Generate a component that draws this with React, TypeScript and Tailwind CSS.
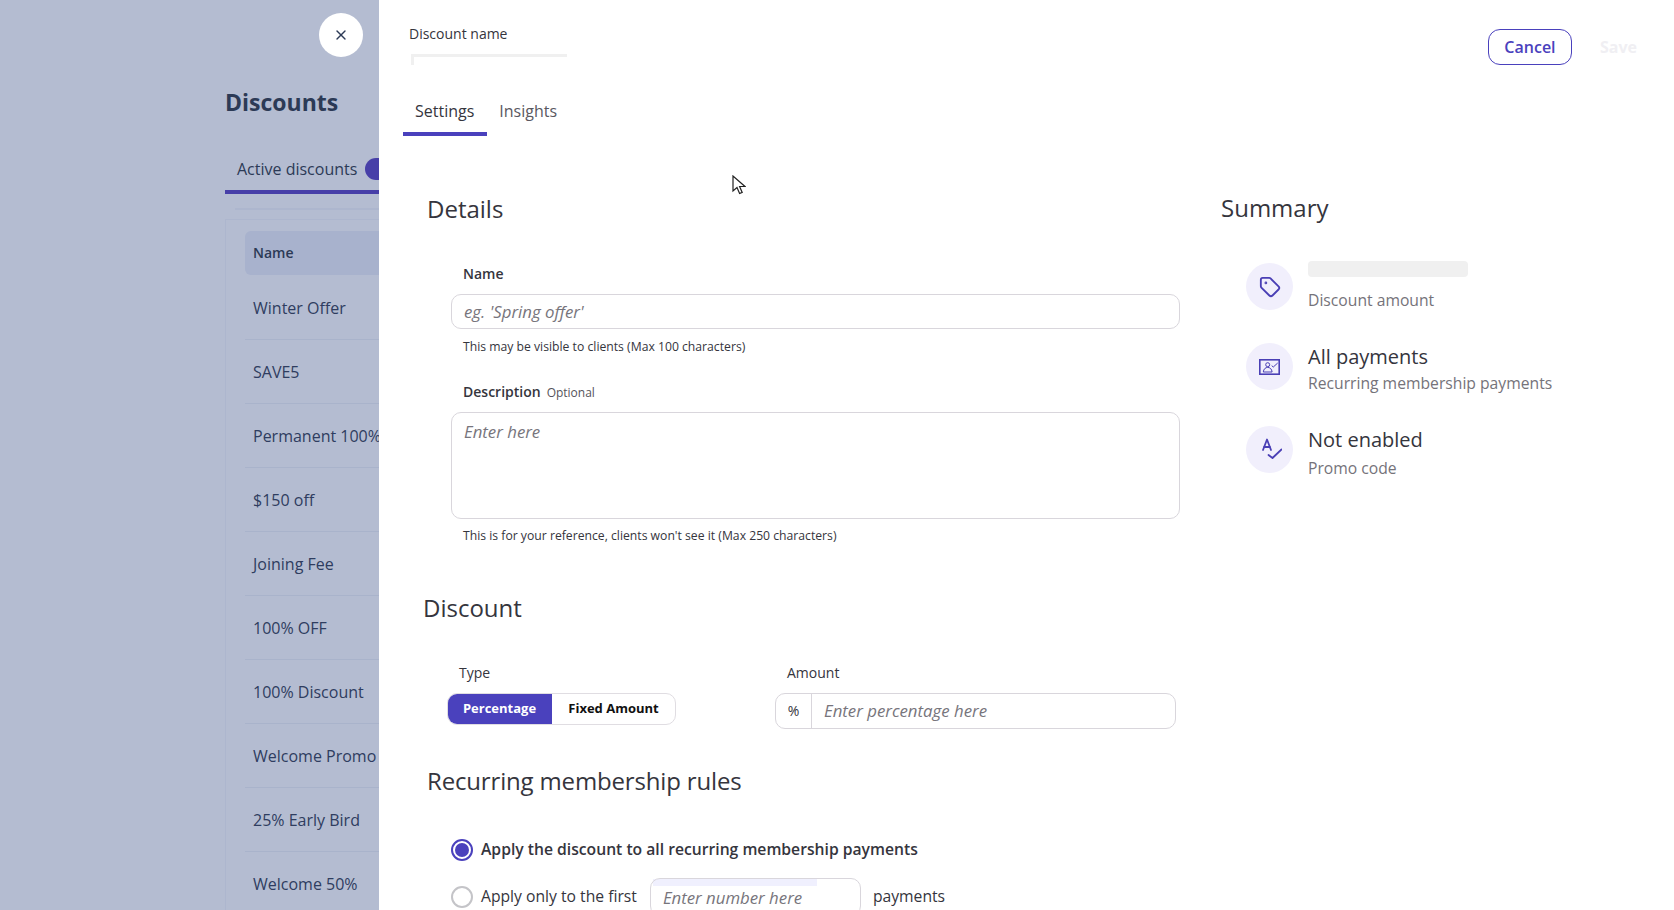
import React from 'react';
import { X, Tag } from 'lucide-react';

const discounts = [
  'Winter Offer',
  'SAVE5',
  'Permanent 100%',
  '$150 off',
  'Joining Fee',
  '100% OFF',
  '100% Discount',
  'Welcome Promo',
  '25% Early Bird',
  'Welcome 50%',
];

const inputClass =
  'border border-[#d9d6dc] text-[16.8px] outline-none placeholder:italic placeholder:text-[#77757c]';

const MembershipIcon = () => (
  <svg width="21" height="16" viewBox="0 0 21 16" fill="none" stroke="#4a3fb5">
    <rect x="0.8" y="0.8" width="19.4" height="14.4" strokeWidth="1.6" />
    <circle cx="8.7" cy="5.7" r="2" strokeWidth="1" />
    <path d="M4.3 13c.3-3 2.2-4.6 4.4-4.6s4.1 1.6 4.4 4.6z" strokeWidth="1" />
    <path d="M12.7 6.7l1.6 1.3 4.4-4" strokeWidth="1" />
  </svg>
);

const PromoIcon = () => (
  <svg width="24" height="24" viewBox="0 0 24 24" fill="none" stroke="#4a3fb5" strokeWidth="1.8" strokeLinecap="round" strokeLinejoin="round">
    <path d="M5 12L9 1.5 13 12" />
    <path d="M6.2 9h5.6" />
    <path d="M10.5 17l4 3 9-8.5" />
  </svg>
);

const SummaryCircle = ({ children, className }: { children: React.ReactNode; className: string }) => (
  <div className={`w-[47px] h-[47px] flex-none rounded-full bg-[#f1effc] flex items-center justify-center ${className}`}>
    {children}
  </div>
);

const DiscountsBackdrop = () => (
  <div className="w-[379px] flex-none h-full bg-[#b4bcd1] overflow-hidden text-[#2c3a56]">
    <div className="flex justify-end pr-4 pt-[13px]">
      <button className="w-11 h-11 rounded-full bg-white flex items-center justify-center text-[#2c3a56]">
        <X size={16} strokeWidth={2} />
      </button>
    </div>
    <div className="ml-[225px]">
      <h1 className="mt-[29px] text-[23px] leading-8 font-bold whitespace-nowrap">Discounts</h1>
      <div className="mt-[39px] pl-3 pb-[9px] flex items-center gap-2 whitespace-nowrap border-b-4 border-[#473fa8] leading-6">
        <span>Active discounts</span>
        <span className="w-[30px] h-[22px] flex-none rounded-full bg-[#473fa8]" />
      </div>
      <div className="mt-[14px] ml-[10px] border-t-2 border-[#adb6ce]" />
      <div className="mt-[9px] border-l border-t border-[#adb6ce] pl-[19px] pt-[11px]">
        <div className="h-11 bg-[#a8b2cd] rounded-l-md pl-2 flex items-center text-sm font-semibold">Name</div>
        <div>
          {discounts.map((name) => (
            <div
              key={name}
              className="h-16 pl-2 flex items-center whitespace-nowrap border-b border-[#a9b3cb] text-[#2f3d60] first:mt-px"
            >
              {name}
            </div>
          ))}
        </div>
      </div>
    </div>
  </div>
);

const SummaryPanel = () => (
  <div className="w-[415px] flex-none pt-14">
    <h2 className="text-2xl leading-8 text-[#35353d]">Summary</h2>
    <div className="ml-[25px] mt-[37px] flex gap-[15px]">
      <SummaryCircle className="mt-[2px]">
        <Tag size={22} color="#4a3fb5" strokeWidth={2} />
      </SummaryCircle>
      <div>
        <div className="w-40 h-4 rounded bg-[#f0f0f0]" />
        <div className="mt-[13px] text-[15.7px] leading-5 text-[#75737a]">Discount amount</div>
      </div>
    </div>
    <div className="ml-[25px] mt-[33px] flex gap-[15px]">
      <SummaryCircle className="mt-0">
        <MembershipIcon />
      </SummaryCircle>
      <div>
        <div className="text-xl leading-7 text-[#35353d]">All payments</div>
        <div className="text-[15.7px] leading-6 text-[#75737a]">Recurring membership payments</div>
      </div>
    </div>
    <div className="ml-[25px] mt-[31px] flex gap-[15px]">
      <SummaryCircle className="mt-0">
        <PromoIcon />
      </SummaryCircle>
      <div>
        <div className="text-xl leading-7 text-[#35353d]">Not enabled</div>
        <div className="mt-0.5 text-[15.7px] leading-6 text-[#75737a]">Promo code</div>
      </div>
    </div>
  </div>
);

const SettingsForm = () => (
  <div className="w-[842px] flex-none pl-11">
    <h2 className="ml-1 mt-[57px] text-2xl leading-8 text-[#35353d]">Details</h2>
    <label className="block ml-10 mt-[39px] text-sm leading-5 font-semibold text-[#35353d]">Name</label>
    <input
      className={`${inputClass} block ml-7 mt-2.5 w-[729px] h-[35px] rounded-[10px] px-3 bg-white`}
      placeholder="eg. 'Spring offer'"
    />
    <p className="ml-10 mt-2.5 text-[12.2px] leading-4 text-[#35353d]">This may be visible to clients (Max 100 characters)</p>
    <div className="ml-10 mt-[27px] flex items-baseline gap-1.5 leading-5">
      <span className="text-sm font-semibold text-[#35353d]">Description</span>
      <span className="text-xs text-[#55535a]">Optional</span>
    </div>
    <textarea
      className={`${inputClass} block ml-7 mt-2.5 w-[729px] h-[107px] rounded-[10px] px-3 py-1.5 resize-none bg-white`}
      placeholder="Enter here"
    />
    <p className="ml-10 mt-[9px] text-[12.2px] leading-4 text-[#35353d]">
      This is for your reference, clients won't see it (Max 250 characters)
    </p>

    <h2 className="mt-12 text-2xl leading-8 text-[#35353d]">Discount</h2>
    <div className="ml-6 mt-[39px] flex">
      <div className="w-[328px] flex-none">
        <div className="pl-3 text-sm leading-5 font-medium text-[#35353d]">Type</div>
        <div className="mt-2.5 w-[229px] h-8 flex rounded-[10px] border border-[#e0dde2] overflow-hidden text-[13px] font-bold">
          <div className="w-[105px] -my-px -ml-px bg-[#4a41bd] text-white flex items-center justify-center">Percentage</div>
          <div className="flex-1 text-[#111] flex items-center justify-center">Fixed Amount</div>
        </div>
      </div>
      <div className="w-[401px] flex-none">
        <div className="pl-3 text-sm leading-5 font-medium text-[#35353d]">Amount</div>
        <div className="mt-2.5 h-9 flex rounded-[10px] border border-[#d9d6dc] overflow-hidden">
          <div className="w-9 flex-none border-r border-[#d9d6dc] flex items-center justify-center text-sm text-[#35353d]">%</div>
          <input
            className="flex-1 min-w-0 px-3 text-[16.8px] outline-none placeholder:italic placeholder:text-[#77757c]"
            placeholder="Enter percentage here"
          />
        </div>
      </div>
    </div>

    <h2 className="ml-1 mt-9 text-2xl tracking-[-0.16px] leading-8 text-[#35353d]">Recurring membership rules</h2>
    <div className="ml-7 mt-[42px] flex items-center gap-2 h-[22px]">
      <span className="w-[22px] h-[22px] flex-none rounded-full border-2 border-[#4a41bd] flex items-center justify-center">
        <span className="w-3.5 h-3.5 rounded-full bg-[#4a41bd]" />
      </span>
      <span className="text-[15.7px] font-semibold text-[#35353d]">Apply the discount to all recurring membership payments</span>
    </div>
    <div className="ml-7 mt-[17px] flex items-center gap-2 text-[15.7px]">
      <span className="w-[22px] h-[22px] flex-none rounded-full border-2 border-[#c4c4c8]" />
      <span className="text-[#35353d]">Apply only to the first</span>
      <div className="relative ml-[5px] flex-none">
        <span className="absolute left-[3px] top-px w-[164px] h-[7px] bg-[#f0f0fe]" />
        <input
          className={`${inputClass} block relative bg-transparent w-[211px] h-[38px] rounded-[10px] px-3`}
          placeholder="Enter number here"
        />
      </div>
      <span className="ml-1 text-[#35353d]">payments</span>
    </div>
  </div>
);

export default function App() {
  return (
    <div className="relative w-full h-screen flex overflow-hidden bg-white font-['Open_Sans',sans-serif]">
      <DiscountsBackdrop />
      <div className="flex-1 min-w-0 h-full overflow-hidden">
        <div className="flex justify-between pr-[37px]">
          <div className="pl-[30px] pt-6">
            <div className="text-sm leading-5 text-[#35353d]">Discount name</div>
            <div className="ml-0.5 mt-[10px] w-[156px] h-[11px] border-t-[3px] border-l-[3px] border-[#f0f0f0]" />
          </div>
          <div className="pt-[29px] flex items-center gap-7">
            <button className="w-[84px] h-9 rounded-[12px] border border-[#4a41bd] text-[#4a41bd] font-semibold">Cancel</button>
            <span className="font-bold text-[#f0eff3]">Save</span>
          </div>
        </div>
        <div className="ml-6 mt-[34px] flex">
          <div className="pl-3 pr-[13px] pb-[9px] border-b-4 border-[#4a41bd] rounded-t leading-6 text-[#35353d]">Settings</div>
          <div className="px-3 leading-6 text-[#5a585f]">Insights</div>
        </div>
        <div className="flex">
          <SettingsForm />
          <SummaryPanel />
        </div>
      </div>
      {/* mouse pointer caught in the shot */}
      <svg className="absolute left-[732px] top-[175px]" width="14" height="21" viewBox="0 0 14 21">
        <path d="M1 1v15l4-3.5 2.6 6 2.6-1.1-2.6-5.9H13z" fill="#fff" stroke="#222" strokeWidth="1.2" />
      </svg>
    </div>
  );
}
